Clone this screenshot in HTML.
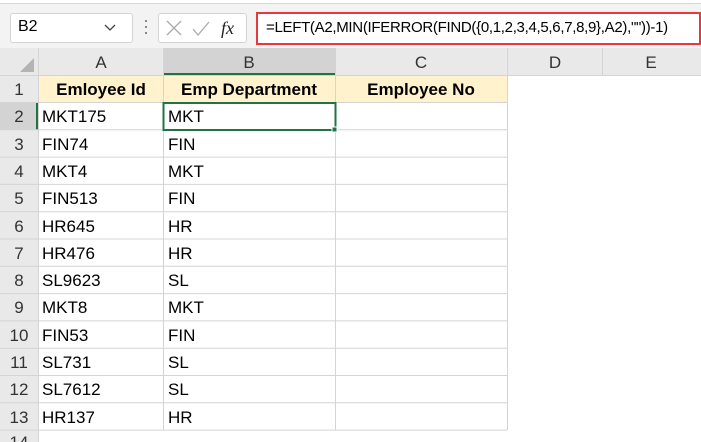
<!DOCTYPE html>
<html><head><style>
body{margin:0;width:701px;height:442px;overflow:hidden;background:#fff;font-family:"Liberation Sans",sans-serif;position:relative}
.a{position:absolute;box-sizing:border-box}
.t{font-size:17px;color:#000;white-space:nowrap}
</style></head><body>
<div class="a" style="left:0;top:0;width:701px;height:48px;background:#f3f3f3"></div>
<div class="a" style="left:0;top:0;width:701px;height:4px;background:#fff;border-bottom:1px solid #d8d8d8"></div>
<div class="a" style="left:10px;top:13px;width:123px;height:30px;background:#fff;border:1px solid #d4d4d4;border-radius:3px"></div>
<div class="a t" style="left:18px;top:18px;font-size:16px">B2</div>
<svg class="a" style="left:104px;top:22px" width="12" height="10"><path d="M1 3l5 5 5-5" fill="none" stroke="#444" stroke-width="1.3"/></svg>
<div class="a" style="left:145px;top:20px;width:2px;height:2px;background:#888;box-shadow:0 6px #888,0 12px #888"></div>
<div class="a" style="left:158px;top:13px;width:89px;height:30px;background:#fff;border:1px solid #d4d4d4;border-radius:3px"></div>
<svg class="a" style="left:165px;top:19px" width="80" height="20"><path d="M2 2l14 14M16 2L2 16" stroke="#aaa" stroke-width="1.3"/><path d="M28 10l5 6 11-13" fill="none" stroke="#aaa" stroke-width="1.3"/><text x="56" y="15" font-family="Liberation Serif" font-style="italic" font-size="18" fill="#222">fx</text></svg>
<div class="a" style="left:256px;top:12px;width:445px;height:33px;background:#fff;border:2.5px solid #e8383d"></div>
<div class="a t" style="left:266px;top:19px;font-size:15px;letter-spacing:-0.3px">=LEFT(A2,MIN(IFERROR(FIND({0,1,2,3,4,5,6,7,8,9},A2),""))-1)</div>
<svg class="a" style="left:0;top:48px" width="701" height="394">
<rect x="0" y="0" width="701" height="27" fill="#e9e9e9"/>
<rect x="0" y="0" width="38" height="394" fill="#e9e9e9"/>
<rect x="163" y="0" width="172" height="27" fill="#d3d3d3"/>
<rect x="163" y="25" width="172" height="2" fill="#217346"/>
<rect x="0" y="54.5" width="38" height="27.3" fill="#d3d3d3"/>
<rect x="36" y="54.5" width="2" height="27.3" fill="#217346"/>
<polygon points="34,10 34,24 20,24" fill="#b4b4b4"/>
<rect x="38" y="27" width="469" height="27.3" fill="#fff2cc"/>
<g stroke="#d4d4d4" stroke-width="1">
<line x1="38.5" y1="0" x2="38.5" y2="394"/>
<line x1="163.5" y1="0" x2="163.5" y2="382"/>
<line x1="335.5" y1="0" x2="335.5" y2="382"/>
<line x1="507.5" y1="0" x2="507.5" y2="382"/>
<line x1="602.5" y1="0" x2="602.5" y2="27"/>
<line x1="0" y1="27.5" x2="701" y2="27.5"/>
<line x1="0" y1="54.5" x2="507" y2="54.5"/>
<line x1="0" y1="81.8" x2="507" y2="81.8"/><line x1="0" y1="109.1" x2="507" y2="109.1"/><line x1="0" y1="136.4" x2="507" y2="136.4"/><line x1="0" y1="163.7" x2="507" y2="163.7"/><line x1="0" y1="191" x2="507" y2="191"/><line x1="0" y1="218.3" x2="507" y2="218.3"/><line x1="0" y1="245.6" x2="507" y2="245.6"/><line x1="0" y1="272.9" x2="507" y2="272.9"/><line x1="0" y1="300.2" x2="507" y2="300.2"/><line x1="0" y1="327.5" x2="507" y2="327.5"/><line x1="0" y1="354.8" x2="507" y2="354.8"/><line x1="0" y1="382.1" x2="507" y2="382.1"/>
</g>
<rect x="163.5" y="55" width="172" height="27" fill="none" stroke="#217346" stroke-width="2"/>
<rect x="332" y="79" width="5" height="5" fill="#217346" stroke="#fff"/>
<g font-family="Liberation Sans" font-size="17" fill="#333" text-anchor="middle">
<text x="101" y="20">A</text><text x="249" y="20">B</text><text x="421" y="20">C</text><text x="555" y="20">D</text><text x="651" y="20">E</text>
<text x="19" y="47">1</text><text x="19" y="74">2</text><text x="19" y="102">3</text><text x="19" y="129">4</text><text x="19" y="156">5</text><text x="19" y="184">6</text><text x="19" y="211">7</text><text x="19" y="238">8</text><text x="19" y="265">9</text><text x="19" y="293">10</text><text x="19" y="320">11</text><text x="19" y="347">12</text><text x="19" y="375">13</text><text x="19" y="400">14</text>
</g>
<g font-family="Liberation Sans" font-size="17" font-weight="bold" fill="#000" text-anchor="middle">
<text x="101" y="47">Emloyee Id</text><text x="249" y="47">Emp Department</text><text x="421" y="47">Employee No</text>
</g>
<g font-family="Liberation Sans" font-size="17" fill="#000">
<text x="42" y="74">MKT175</text><text x="168" y="74">MKT</text>
<text x="42" y="102">FIN74</text><text x="168" y="102">FIN</text>
<text x="42" y="129">MKT4</text><text x="168" y="129">MKT</text>
<text x="42" y="156">FIN513</text><text x="168" y="156">FIN</text>
<text x="42" y="184">HR645</text><text x="168" y="184">HR</text>
<text x="42" y="211">HR476</text><text x="168" y="211">HR</text>
<text x="42" y="238">SL9623</text><text x="168" y="238">SL</text>
<text x="42" y="265">MKT8</text><text x="168" y="265">MKT</text>
<text x="42" y="293">FIN53</text><text x="168" y="293">FIN</text>
<text x="42" y="320">SL731</text><text x="168" y="320">SL</text>
<text x="42" y="347">SL7612</text><text x="168" y="347">SL</text>
<text x="42" y="375">HR137</text><text x="168" y="375">HR</text>
</g>
</svg>
</body></html>
